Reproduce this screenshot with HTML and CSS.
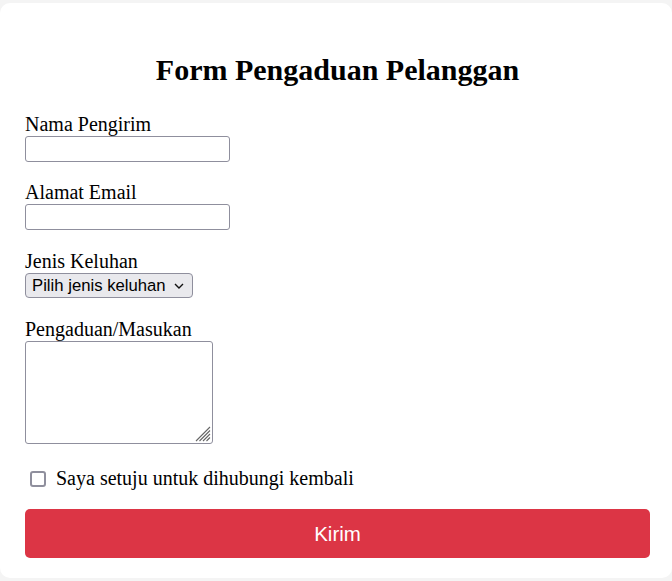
FILE: index.html
```html
<!DOCTYPE html>
<html lang="id">
<head>
<meta charset="utf-8">
<title>Form Pengaduan Pelanggan</title>
<link rel="stylesheet" href="styles.css">
</head>
<body>
<div class="card">
  <h2 class="title">Form Pengaduan Pelanggan</h2>
  <form class="form">
    <div class="group">
      <label class="label" for="nama">Nama Pengirim</label>
      <input class="field" type="text" id="nama">
    </div>
    <div class="group group-wide">
      <label class="label" for="email">Alamat Email</label>
      <input class="field" type="email" id="email">
    </div>
    <div class="group group-wide">
      <label class="label" for="jenis">Jenis Keluhan</label>
      <div class="select">
        <span class="select-text">Pilih jenis keluhan</span>
        <svg class="chev" width="10" height="6" viewBox="0 0 10 6"><path d="M1 1 L5 5 L9 1" fill="none" stroke="#111" stroke-width="1.4"/></svg>
      </div>
    </div>
    <div class="group">
      <label class="label" for="pesan">Pengaduan/Masukan</label>
      <div class="textarea" id="pesan">
        <svg class="grip" width="16" height="16" viewBox="0 0 16 16"><path d="M15 1 L1 15 M15 4.5 L4.5 15 M15 8 L8 15 M15 11.5 L11.5 15" stroke="#666" stroke-width="1.1"/></svg>
      </div>
    </div>
    <div class="check-row">
      <span class="checkbox"></span>
      <span class="check-text">Saya setuju untuk dihubungi kembali</span>
    </div>
    <div class="button">Kirim</div>
  </form>
</div>
</body>
</html>
```

FILE: styles.css
```css
html, body {
  margin: 0;
  padding: 0;
}
body {
  background: #f4f4f4;
  padding-top: 3px;
  font-family: "Liberation Serif", "Times New Roman", serif;
  color: #000;
}
.card {
  background: #ffffff;
  border-radius: 10px;
  padding: 25px 22px 21px 25px;
  height: 575px;
  box-sizing: border-box;
}
.title {
  margin: 25px 0 27px;
  font-size: 30px;
  font-weight: bold;
  line-height: 33px;
  text-align: center;
}
.form {
  display: flex;
  flex-direction: column;
}
.group {
  display: flex;
  flex-direction: column;
  align-items: flex-start;
  margin-bottom: 19px;
}
.group-wide {
  margin-bottom: 20px;
}
.label {
  font-size: 20px;
  line-height: 23px;
}
.field {
  width: 205px;
  height: 26px;
  box-sizing: border-box;
  border: 1px solid #8f8f9d;
  border-radius: 3px;
  margin: 0;
  padding: 2px 3px;
  background: #fff;
}
.select {
  width: 168px;
  height: 25px;
  box-sizing: border-box;
  border: 1px solid #8f8f9d;
  border-radius: 4px;
  background: #e9e9ed;
  display: flex;
  align-items: center;
  justify-content: space-between;
  padding: 0 8px 0 6px;
  font-family: "Liberation Sans", Arial, sans-serif;
  font-size: 16.7px;
  color: #000;
}
.chev {
  display: block;
}
.textarea {
  width: 188px;
  height: 103px;
  box-sizing: border-box;
  border: 1px solid #8f8f9d;
  border-radius: 3px;
  display: flex;
  align-items: flex-end;
  justify-content: flex-end;
  padding: 0 1px 1px 0;
  margin-bottom: 4px;
}
.grip {
  display: block;
}
.check-row {
  display: flex;
  align-items: center;
  height: 23px;
  margin-bottom: 19px;
}
.checkbox {
  width: 16px;
  height: 16px;
  box-sizing: border-box;
  border: 2px solid #8f8f9d;
  border-radius: 3px;
  margin: 1px 10px 0 5px;
  background: #fff;
}
.check-text {
  font-size: 20px;
  line-height: 23px;
}
.button {
  height: 49px;
  background: #dc3545;
  color: #fff;
  border-radius: 5px;
  display: flex;
  align-items: center;
  justify-content: center;
  font-family: "Liberation Sans", Arial, sans-serif;
  font-size: 20.5px;
}
```
